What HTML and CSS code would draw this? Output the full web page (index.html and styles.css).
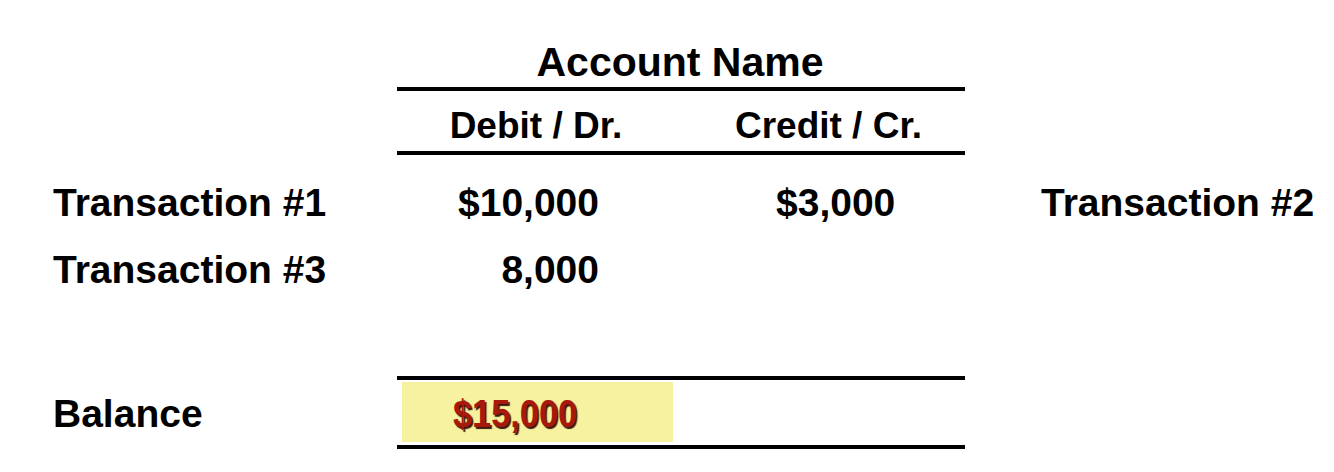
FILE: index.html
```html
<!DOCTYPE html>
<html>
<head>
<meta charset="utf-8">
<link rel="stylesheet" href="styles.css">
</head>
<body>
<div class="ledger">
  <div class="row row-title">
    <div class="label"></div>
    <div class="acct title">Account Name</div>
    <div class="aside"></div>
  </div>
  <div class="row row-head">
    <div class="label"></div>
    <div class="acct head">
      <div class="half debit-h">Debit / Dr.</div>
      <div class="half credit-h">Credit / Cr.</div>
    </div>
    <div class="aside"></div>
  </div>
  <div class="row row-t1">
    <div class="label">Transaction #1</div>
    <div class="acct">
      <div class="half debit-v">$10,000</div>
      <div class="half credit-v">$3,000</div>
    </div>
    <div class="aside">Transaction #2</div>
  </div>
  <div class="row row-t3">
    <div class="label">Transaction #3</div>
    <div class="acct">
      <div class="half debit-v">8,000</div>
      <div class="half credit-v"></div>
    </div>
    <div class="aside"></div>
  </div>
  <div class="row row-bal">
    <div class="label bal-label">Balance</div>
    <div class="acct bal">
      <div class="highlight"><span class="total">$15,000</span></div>
    </div>
    <div class="aside"></div>
  </div>
</div>
</body>
</html>
```

FILE: styles.css
```css
html, body {
  margin: 0;
  padding: 0;
  background: #ffffff;
}

body {
  font-family: "Liberation Sans", Arial, sans-serif;
  font-weight: bold;
  color: #000000;
  width: 1334px;
  height: 472px;
  overflow: hidden;
}

.ledger {
  display: flex;
  flex-direction: column;
  padding-left: 53px;
}

.row {
  display: grid;
  grid-template-columns: 344px 568px 1fr;
  align-items: start;
}

.label, .aside {
  font-size: 39px;
  line-height: 44px;
  white-space: nowrap;
}

.aside {
  padding-left: 76px;
}

.acct {
  display: grid;
  grid-template-columns: 284px 284px;
}

.title {
  display: block;
  font-size: 41px;
  line-height: 48px;
  text-align: center;
  padding-top: 38px;
  padding-bottom: 1px;
  padding-right: 2px;
  border-bottom: 4px solid #000;
}

.head {
  font-size: 37px;
  line-height: 40px;
  padding-top: 15px;
  padding-bottom: 5px;
  border-bottom: 4px solid #000;
}

.debit-h {
  text-align: center;
  padding-right: 6px;
}

.credit-h {
  text-align: center;
  padding-left: 11px;
}

.row-t1 {
  margin-top: 26px;
}

.row-t3 {
  margin-top: 23px;
}

.half {
  white-space: nowrap;
}

.row-t1 .acct, .row-t3 .acct {
  font-size: 39px;
  line-height: 44px;
}

.debit-v {
  text-align: right;
  padding-right: 82px;
}

.credit-v {
  text-align: left;
  padding-left: 95px;
}

.row-bal {
  margin-top: 84px;
}

.bal-label {
  padding-top: 16px;
}

.bal {
  display: block;
  border-top: 4px solid #000;
  border-bottom: 4px solid #000;
  padding: 2px 0 3px 5px;
}

.highlight {
  width: 271px;
  height: 60px;
  background: #f7f2a0;
  display: flex;
  align-items: center;
  padding-left: 51px;
  box-sizing: border-box;
}

.total {
  display: inline-block;
  font-size: 39px;
  line-height: 44px;
  color: #a8190c;
  text-shadow: 2px 2px 1px #3a1a10;
  transform: scaleX(0.88);
  transform-origin: left center;
  margin-top: 4px;
}
```
